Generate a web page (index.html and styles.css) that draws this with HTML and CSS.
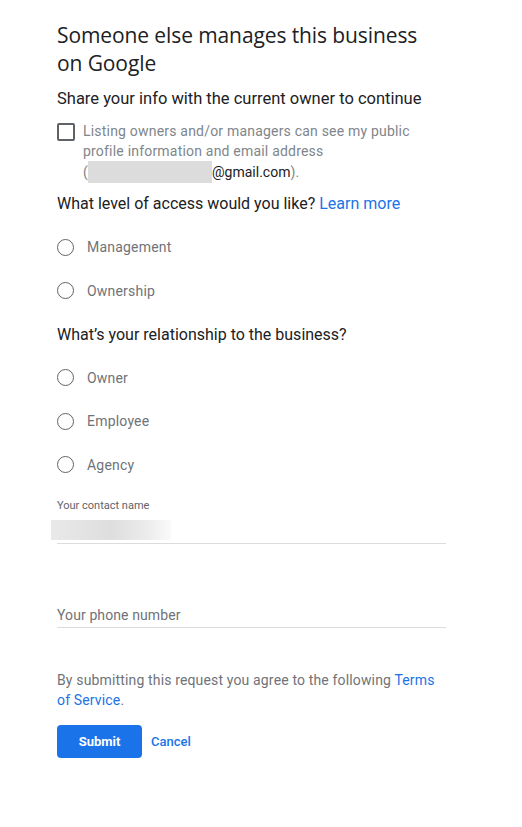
FILE: index.html
```html
<!DOCTYPE html>
<html>
<head>
<meta charset="utf-8">
<link rel="stylesheet" href="styles.css">
</head>
<body>
<div class="page">
  <h1 class="title">Someone else manages this business on Google</h1>
  <p class="subtitle">Share your info with the current owner to continue</p>
  <div class="consent">
    <span class="checkbox"></span>
    <p class="consent-text">Listing owners and/or managers can see my public profile information and email address <span class="nowrap">(<span class="blur-email"></span><span class="email">@gmail.com</span>).</span></p>
  </div>
  <p class="question">What level of access would you like? <a class="link">Learn more</a></p>
  <div class="radios">
    <div class="radio-row"><span class="radio"></span><span class="radio-label">Management</span></div>
    <div class="radio-row"><span class="radio"></span><span class="radio-label">Ownership</span></div>
  </div>
  <p class="question q2">What’s your relationship to the business?</p>
  <div class="radios">
    <div class="radio-row"><span class="radio"></span><span class="radio-label">Owner</span></div>
    <div class="radio-row"><span class="radio"></span><span class="radio-label">Employee</span></div>
    <div class="radio-row"><span class="radio"></span><span class="radio-label">Agency</span></div>
  </div>
  <div class="field filled">
    <span class="field-label">Your contact name</span>
    <span class="blur-name"></span>
  </div>
  <div class="field empty">
    <span class="placeholder">Your phone number</span>
  </div>
  <p class="terms">By submitting this request you agree to the following <a class="link">Terms of Service</a>.</p>
  <div class="actions">
    <button class="submit">Submit</button>
    <a class="cancel">Cancel</a>
  </div>
</div>
</body>
</html>
```
FILE: styles.css
```css
html, body { margin: 0; padding: 0; background: #fff; }
body { font-family: Roboto, "Noto Sans", Arial, sans-serif; color: #202124; }
.page { width: 389px; padding: 21px 0 0 57px; }
.title { margin: 0; width: 375px; font-family: "Open Sans", Roboto, sans-serif; font-weight: 400; font-size: 21px; line-height: 28px; letter-spacing: -0.1px; color: #202124; }
.subtitle { margin: 10px 0 0; font-size: 16.5px; line-height: 24px; color: #202124; }
.consent { display: flex; gap: 8px; margin-top: 10px; }
.checkbox { flex: none; width: 14px; height: 14px; border: 2px solid #5f6368; border-radius: 2px; margin-top: 2px; }
.consent-text { margin: 0; font-size: 14px; line-height: 20px; color: #80868b; width: 332px; letter-spacing: 0.2px; }
.nowrap { white-space: nowrap; }
.blur-email { display: inline-block; width: 124px; height: 22px; background: #dcdcdc; vertical-align: -6px; margin-left: 0; }
.email { color: #202124; letter-spacing: 0; }
.question { margin: 9px 0 0; font-size: 16px; line-height: 24px; color: #202124; }
.q2 { margin-top: 22px; }
.link { color: #1a73e8; text-decoration: none; }
.radios { display: flex; flex-direction: column; gap: 23.5px; margin-top: 21px; }
.radio-row { display: flex; align-items: center; height: 20px; }
.radio { flex: none; width: 15px; height: 15px; border: 1.5px solid #5f6368; border-radius: 50%; margin-right: 13px; }
.radio-label { font-size: 14px; color: #6f7378; letter-spacing: 0.2px; }
.field { position: relative; border-bottom: 1px solid #dadce0; }
.filled { margin-top: 24px; height: 44px; }
.field-label { display: block; font-size: 11px; line-height: 14px; color: #5f6368; }
.blur-name { display: block; margin: 7px 0 0 -6px; width: 120px; height: 20px; background: linear-gradient(90deg, #e9e9e9 0%, #dedede 50%, #ececec 80%, #fafafa 100%); }
.empty { margin-top: 61px; height: 22px; }
.placeholder { display: block; font-size: 14px; line-height: 20px; color: #6f7378; letter-spacing: 0.1px; }
.terms { margin: 42px 0 0; font-size: 14px; line-height: 20px; color: #6f7378; width: 385px; letter-spacing: 0.15px; }
.actions { display: flex; align-items: center; gap: 9px; margin-top: 15px; }
.submit { width: 85px; height: 33px; border: none; border-radius: 4px; background: #1a73e8; color: #fff; font-family: Roboto, sans-serif; font-weight: 700; font-size: 13px; padding: 0; }
.cancel { color: #1a73e8; font-size: 13px; font-weight: 500; }
```
